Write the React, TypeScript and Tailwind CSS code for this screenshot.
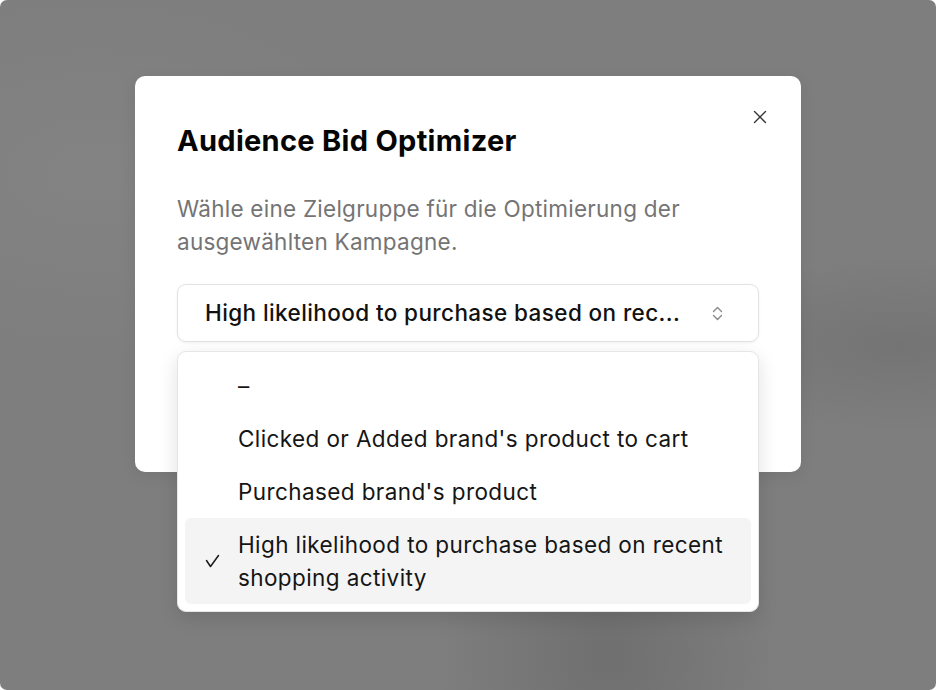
import { X } from 'lucide-react';

const options = [
  { label: '–', selected: false },
  { label: "Clicked or Added brand's product to cart", selected: false },
  { label: "Purchased brand's product", selected: false },
  { label: 'High likelihood to purchase based on recent shopping activity', selected: true },
];

function UpDownIcon() {
  return (
    <svg width="11" height="15" viewBox="0 0 11 15" fill="none" stroke="#8a8a8a" strokeWidth="1.4" strokeLinecap="round" strokeLinejoin="round">
      <path d="M1.5 5.5 L5.5 1.5 L9.5 5.5" />
      <path d="M1.5 9.5 L5.5 13.5 L9.5 9.5" />
    </svg>
  );
}

function CheckIcon() {
  return (
    <svg width="15" height="14" viewBox="0 0 15 14" fill="none" stroke="#1a1a1a" strokeWidth="1.5" strokeLinecap="round" strokeLinejoin="round">
      <path d="M1.5 6.5 L5.5 12.5 L13.5 1.5" />
    </svg>
  );
}

export default function App() {
  return (
    <div className="w-[936px] h-[690px] bg-white font-['Inter',sans-serif]">
      <div className="h-full w-full rounded-[7px] overflow-hidden flex justify-center pt-[76px] bg-[#7e7e7e] bg-[radial-gradient(ellipse_at_65%_95%,#6f6f6f_0%,transparent_20%),radial-gradient(ellipse_at_96%_50%,#747474_0%,transparent_18%),radial-gradient(ellipse_at_10%_25%,#838383_0%,transparent_25%)]">
        <div className="relative w-[666px] h-[396px] rounded-[10px] bg-white shadow-[0_4px_16px_rgba(0,0,0,0.08)] px-[42px] pt-[49px]">
          <button className="absolute right-[30px] top-[30px] text-[#333333]" aria-label="Close">
            <X className="w-[22px] h-[22px]" strokeWidth={1.5} />
          </button>

          <h2 className="text-[29px] leading-8 font-bold tracking-[0.3px] text-[#050505]">
            Audience Bid Optimizer
          </h2>
          <p className="mt-[35px] text-[22.5px] leading-[33px] tracking-[0.25px] text-[#747474]">
            Wähle eine Zielgruppe für die Optimierung der ausgewählten Kampagne.
          </p>

          <div className="relative mt-[26px]">
            <button className="flex h-[58px] w-full items-center justify-between rounded-[9px] border border-[#e3e3e3] bg-white pl-[27px] pr-[35px] shadow-[0_1px_3px_rgba(0,0,0,0.06)]">
              <span className="truncate text-[22.5px] font-medium tracking-[0.4px] text-[#111111]">
                High likelihood to purchase based on rec...
              </span>
              <UpDownIcon />
            </button>

            <div className="absolute left-0 right-0 top-[67px] z-10 rounded-[9px] border border-[#e6e6e6] bg-white p-[7px] shadow-[0_6px_20px_rgba(0,0,0,0.12)]">
              {options.map((opt) => (
                <div
                  key={opt.label}
                  className={`relative flex items-center rounded-md py-[10px] pl-[53px] pr-4 text-[22.5px] leading-[33px] tracking-[0.4px] text-[#151515] ${
                    opt.selected ? 'bg-[#f4f4f4]' : ''
                  }`}
                >
                  {opt.selected && (
                    <span className="absolute left-[20px] top-1/2 -translate-y-1/2 flex">
                      <CheckIcon />
                    </span>
                  )}
                  {opt.label}
                </div>
              ))}
            </div>
          </div>
        </div>
      </div>
    </div>
  );
}
